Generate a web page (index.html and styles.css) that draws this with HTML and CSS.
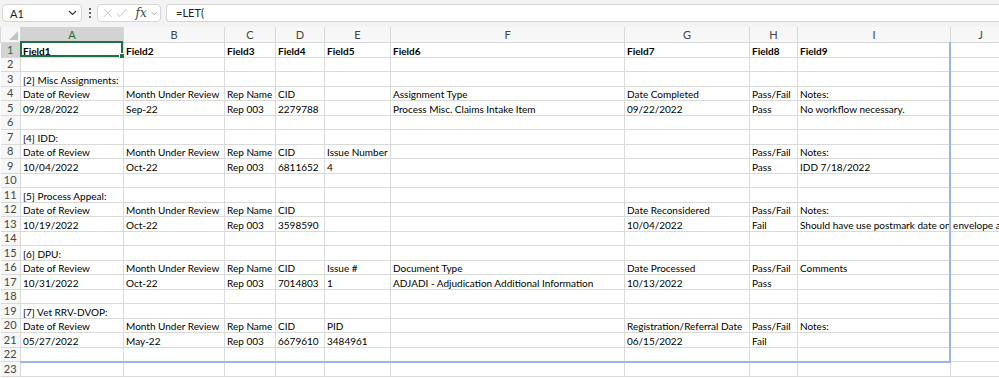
FILE: index.html
```html
<!DOCTYPE html>
<html lang="en">
<head>
    <meta charset="UTF-8" />
    <title>Book1 - Excel</title>
    <link rel="stylesheet" href="styles.css">
</head>
<body>

    <!-- Formula bar -->
    <div class="formula-bar">
        <div class="name-box">
            <span>A1</span>
            <svg class="chev" width="9" height="6" viewBox="0 0 9 6"><path d="M1 1l3.5 3.5L8 1" fill="none" stroke="#333" stroke-width="1.1"/></svg>
        </div>
        <svg class="bar-dots" width="4" height="12" viewBox="0 0 4 12"><circle cx="2" cy="2" r="1.1" fill="#444"/><circle cx="2" cy="6" r="1.1" fill="#444"/><circle cx="2" cy="10" r="1.1" fill="#444"/></svg>
        <div class="fn-box">
            <svg width="12" height="12" viewBox="0 0 12 12"><path d="M1 1l10 10M11 1L1 11" stroke="#b8b8b8" stroke-width="1"/></svg>
            <svg width="14" height="12" viewBox="0 0 14 12"><path d="M1 6.5l4 4L13 1" fill="none" stroke="#b8b8b8" stroke-width="1"/></svg>
            <span class="fx">fx</span>
            <svg class="chev-light" width="8" height="5" viewBox="0 0 8 5"><path d="M1 1l3 3 3-3" fill="none" stroke="#888" stroke-width="1"/></svg>
        </div>
        <div class="formula-input">=LET(</div>
    </div>

    <!-- Sheet -->
    <div class="sheet">
        <table class="grid">
            <colgroup>
                <col class="c-rh"><col class="c-a"><col class="c-b"><col class="c-c"><col class="c-d"><col class="c-e">
                <col class="c-f"><col class="c-g"><col class="c-h"><col class="c-i"><col class="c-j">
            </colgroup>
            <thead>
                <tr>
                    <th class="corner"><span class="corner-tri"></span></th>
                    <th class="sel">A</th><th>B</th><th>C</th><th>D</th><th>E</th>
                    <th>F</th><th>G</th><th>H</th><th>I</th><th>J</th>
                </tr>
            </thead>
            <tbody>
                <tr class="bold"><th class="sel">1</th><td>Field1</td><td>Field2</td><td>Field3</td><td>Field4</td><td>Field5</td><td>Field6</td><td>Field7</td><td>Field8</td><td>Field9</td><td></td></tr>
                <tr><th>2</th><td></td><td></td><td></td><td></td><td></td><td></td><td></td><td></td><td></td><td></td></tr>
                <tr><th>3</th><td>[2] Misc Assignments:</td><td></td><td></td><td></td><td></td><td></td><td></td><td></td><td></td><td></td></tr>
                <tr><th>4</th><td>Date of Review</td><td>Month Under Review</td><td>Rep Name</td><td>CID</td><td></td><td>Assignment Type</td><td>Date Completed</td><td>Pass/Fail</td><td>Notes:</td><td></td></tr>
                <tr><th>5</th><td>09/28/2022</td><td>Sep-22</td><td>Rep 003</td><td>2279788</td><td></td><td>Process Misc. Claims Intake Item</td><td>09/22/2022</td><td>Pass</td><td>No workflow necessary.</td><td></td></tr>
                <tr><th>6</th><td></td><td></td><td></td><td></td><td></td><td></td><td></td><td></td><td></td><td></td></tr>
                <tr><th>7</th><td>[4] IDD:</td><td></td><td></td><td></td><td></td><td></td><td></td><td></td><td></td><td></td></tr>
                <tr><th>8</th><td>Date of Review</td><td>Month Under Review</td><td>Rep Name</td><td>CID</td><td>Issue Number</td><td></td><td></td><td>Pass/Fail</td><td>Notes:</td><td></td></tr>
                <tr><th>9</th><td>10/04/2022</td><td>Oct-22</td><td>Rep 003</td><td>6811652</td><td>4</td><td></td><td></td><td>Pass</td><td>IDD 7/18/2022</td><td></td></tr>
                <tr><th>10</th><td></td><td></td><td></td><td></td><td></td><td></td><td></td><td></td><td></td><td></td></tr>
                <tr><th>11</th><td>[5] Process Appeal:</td><td></td><td></td><td></td><td></td><td></td><td></td><td></td><td></td><td></td></tr>
                <tr><th>12</th><td>Date of Review</td><td>Month Under Review</td><td>Rep Name</td><td>CID</td><td></td><td></td><td>Date Reconsidered</td><td>Pass/Fail</td><td>Notes:</td><td></td></tr>
                <tr><th>13</th><td>10/19/2022</td><td>Oct-22</td><td>Rep 003</td><td>3598590</td><td></td><td></td><td>10/04/2022</td><td>Fail</td><td>Should have use postmark date on envelope a</td><td></td></tr>
                <tr><th>14</th><td></td><td></td><td></td><td></td><td></td><td></td><td></td><td></td><td></td><td></td></tr>
                <tr><th>15</th><td>[6] DPU:</td><td></td><td></td><td></td><td></td><td></td><td></td><td></td><td></td><td></td></tr>
                <tr><th>16</th><td>Date of Review</td><td>Month Under Review</td><td>Rep Name</td><td>CID</td><td>Issue #</td><td>Document Type</td><td>Date Processed</td><td>Pass/Fail</td><td>Comments</td><td></td></tr>
                <tr><th>17</th><td>10/31/2022</td><td>Oct-22</td><td>Rep 003</td><td>7014803</td><td>1</td><td>ADJADI - Adjudication Additional Information</td><td>10/13/2022</td><td>Pass</td><td></td><td></td></tr>
                <tr><th>18</th><td></td><td></td><td></td><td></td><td></td><td></td><td></td><td></td><td></td><td></td></tr>
                <tr><th>19</th><td>[7] Vet RRV-DVOP:</td><td></td><td></td><td></td><td></td><td></td><td></td><td></td><td></td><td></td></tr>
                <tr><th>20</th><td>Date of Review</td><td>Month Under Review</td><td>Rep Name</td><td>CID</td><td>PID</td><td></td><td>Registration/Referral Date</td><td>Pass/Fail</td><td>Notes:</td><td></td></tr>
                <tr><th>21</th><td>05/27/2022</td><td>May-22</td><td>Rep 003</td><td>6679610</td><td>3484961</td><td></td><td>06/15/2022</td><td>Fail</td><td></td><td></td></tr>
                <tr><th>22</th><td></td><td></td><td></td><td></td><td></td><td></td><td></td><td></td><td></td><td></td></tr>
                <tr><th>23</th><td></td><td></td><td></td><td></td><td></td><td></td><td></td><td></td><td></td><td></td></tr>
            </tbody>
        </table>

        <!-- Page break preview line -->
        <div class="print-area"></div>

        <!-- Selected cell A1 -->
        <div class="active-cell"><span class="fill-handle"></span></div>
    </div>

</body>
</html>
```

FILE: styles.css
```css
body {
    margin: 0;
    width: 999px;
    height: 378px;
    overflow: hidden;
    background: #fff;
    font-family: Lato, "Liberation Sans", sans-serif;
}

/* Formula bar */
.formula-bar {
    display: flex;
    align-items: center;
    height: 18px;
    padding: 4px 0 5px 2px;
    background: #f3f3f3;
}

.name-box {
    width: 80px;
    height: 18px;
    box-sizing: border-box;
    display: flex;
    align-items: center;
    justify-content: space-between;
    padding: 0 4px 0 7px;
    background: #fff;
    border: 1px solid #d6d6d6;
    border-radius: 4px;
    font-size: 11px;
    color: #222;
}

.bar-dots {
    margin: 0 5px 0 6px;
}

.fn-box {
    width: 64px;
    height: 18px;
    box-sizing: border-box;
    display: flex;
    align-items: center;
    gap: 4px;
    padding: 0 3px 0 5px;
    background: #fff;
    border: 1px solid #d6d6d6;
    border-radius: 4px;
}

.fx {
    font-family: "DejaVu Serif", "Liberation Serif", serif;
    font-style: italic;
    font-size: 12px;
    color: #444;
    margin-left: 4px;
}

.formula-input {
    flex: 1;
    height: 18px;
    box-sizing: border-box;
    margin-left: 5px;
    padding: 1px 0 0 9px;
    background: #fff;
    border: 1px solid #d6d6d6;
    border-right: none;
    border-radius: 4px 0 0 4px;
    font-size: 11px;
    color: #222;
}

/* Sheet */
.sheet {
    position: relative;
}

.grid {
    border-collapse: collapse;
    table-layout: fixed;
    width: 1010px;
    font-size: 10px;
    color: #000;
}

.c-rh { width: 20px; }
.c-a { width: 103px; }
.c-b { width: 101px; }
.c-c { width: 51px; }
.c-d { width: 49px; }
.c-e { width: 66px; }
.c-f { width: 234px; }
.c-g { width: 125px; }
.c-h { width: 48px; }
.c-i { width: 153px; }
.c-j { width: 60px; }

.grid thead th {
    height: 15px;
    padding: 0;
    background: #f7f7f7;
    border: 1px solid #d9d9d9;
    border-top: none;
    font-weight: normal;
    font-size: 11px;
    color: #444;
    text-align: center;
}

.grid thead th.sel {
    background: #d3d3d3;
    color: #1a6b3c;
    border-bottom-color: #a6a6a6;
}

.grid .corner {
    position: relative;
}

.corner-tri {
    position: absolute;
    right: 2px;
    bottom: 2px;
    width: 0;
    height: 0;
    border-left: 9px solid transparent;
    border-bottom: 9px solid #c4c4c4;
}

.grid tbody tr {
    height: 14.5px;
}

.grid tbody th {
    padding: 0;
    background: #f7f7f7;
    border: 1px solid #d9d9d9;
    border-left: none;
    font-weight: normal;
    font-size: 11px;
    line-height: 12px;
    color: #444;
    text-align: center;
}

.grid tbody th.sel {
    background: #d3d3d3;
    color: #1a6b3c;
}

.grid td {
    padding: 1px 0 0 2px;
    border: 1px solid #dadada;
    line-height: 12px;
    white-space: nowrap;
    overflow: visible;
    vertical-align: bottom;
}

.bold td {
    font-weight: bold;
}

/* Overlays */
.print-area {
    position: absolute;
    left: 20px;
    top: 15px;
    width: 929px;
    height: 319px;
    border-right: 2px solid #9ab5e8;
    border-bottom: 2px solid #9ab5e8;
    pointer-events: none;
}

.active-cell {
    position: absolute;
    left: 20px;
    top: 14px;
    width: 99px;
    height: 12px;
    border: 2px solid #1e7145;
    pointer-events: none;
}

.fill-handle {
    position: absolute;
    right: -4px;
    bottom: -4px;
    width: 4px;
    height: 4px;
    background: #1e7145;
    border: 1px solid #fff;
}
```
